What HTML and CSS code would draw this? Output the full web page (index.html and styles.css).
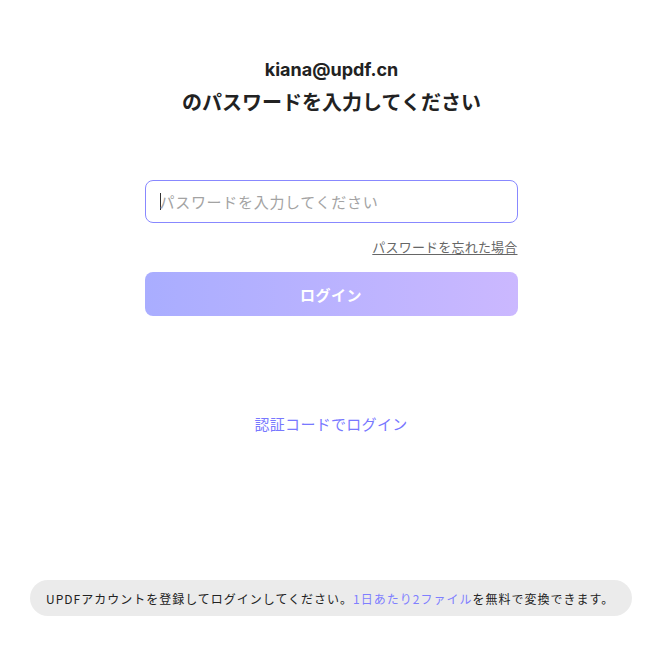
FILE: index.html
```html
<!DOCTYPE html>
<html lang="ja">
<head>
<meta charset="utf-8">
<link rel="stylesheet" href="styles.css">
</head>
<body>
<main class="page">
  <header class="head">
    <div class="email">kiana@updf.cn</div>
    <h1 class="title">のパスワードを入力してください</h1>
  </header>
  <form class="form">
    <div class="field"><span class="caret"></span><span class="placeholder">パスワードを入力してください</span></div>
    <div class="forgot-row"><a class="forgot">パスワードを忘れた場合</a></div>
    <button type="button" class="login">ログイン</button>
  </form>
  <a class="alt">認証コードでログイン</a>
  <div class="notice">UPDFアカウントを登録してログインしてください。<span class="hl">1日あたり2ファイル</span>を無料で変換できます。</div>
</main>
</body>
</html>
```

FILE: styles.css
```css
html, body { margin: 0; padding: 0; background: #fff; }
body { font-family: "Noto Sans CJK JP", "Noto Sans", sans-serif; color: #222; }
.page { width: 660px; height: 667px; display: flex; flex-direction: column; align-items: center; }
.head { margin-top: 58px; display: flex; flex-direction: column; align-items: center; }
.email { font-family: Inter, "Noto Sans CJK JP", sans-serif; font-weight: 700; font-size: 18px; line-height: 24px; color: #222; padding-left: 3px; }
.title { margin: 6px 0 0; font-size: 20px; line-height: 28px; font-weight: 700; color: #222; padding-left: 3px; }
.form { margin-top: 64px; width: 373px; display: flex; flex-direction: column; padding-left: 2px; }
.field { height: 41px; border: 1px solid #8888ff; border-radius: 8px; display: flex; align-items: center; padding-left: 14px; }
.caret { width: 1px; height: 17px; background: #333; margin-right: -1px; }
.placeholder { font-size: 15px; color: #a3a3a3; letter-spacing: 0.7px; }
.forgot-row { display: flex; justify-content: flex-end; margin-top: 15px; }
.forgot { font-size: 13px; line-height: 18px; color: #666; text-decoration: underline; text-underline-offset: 2px; letter-spacing: 0.2px; }
.login { margin-top: 16px; height: 44px; border: 0; border-radius: 8px; background: linear-gradient(90deg, #a9adff 0%, #cbb8ff 100%); color: #fff; font-family: "Noto Sans CJK JP", sans-serif; font-size: 15px; font-weight: 700; letter-spacing: 0.5px; }
.alt { margin-top: 98px; font-size: 15px; line-height: 20px; color: #7878ff; padding-left: 2px; letter-spacing: 0.3px; }
.notice { margin-top: 146px; width: 602px; box-sizing: border-box; height: 36px; border-radius: 18px; background: #ebebeb; display: flex; align-items: center; padding-left: 16px; font-size: 12px; letter-spacing: 1px; color: #222; margin-left: 2px; }
.hl { color: #7f7fff; }
```
